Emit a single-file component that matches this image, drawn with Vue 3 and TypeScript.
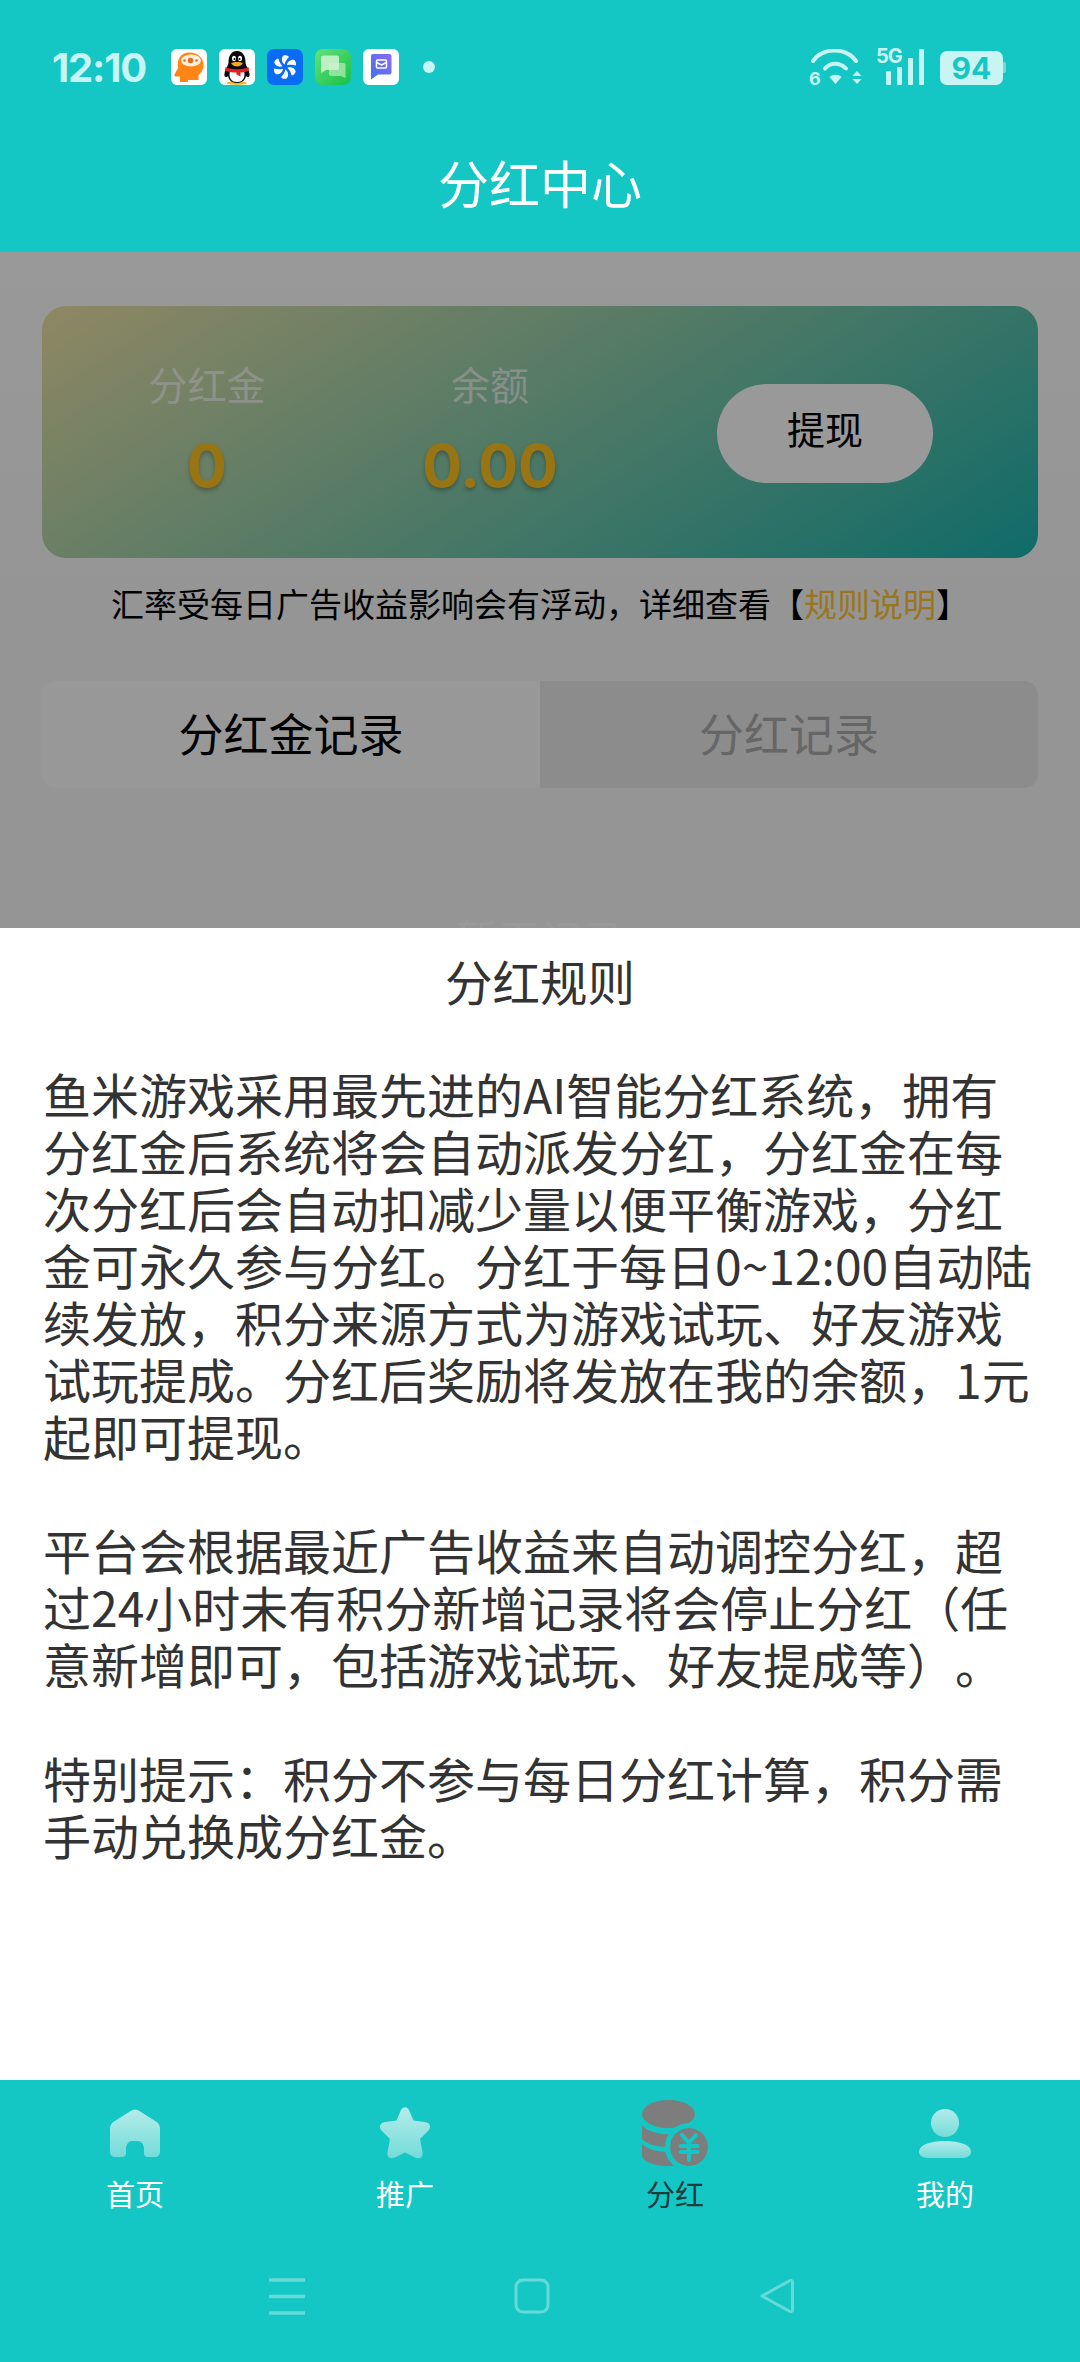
<script setup lang="ts">
const rules: string[][] = [
  [
    '鱼米游戏采用最先进的AI智能分红系统，拥有',
    '分红金后系统将会自动派发分红，分红金在每',
    '次分红后会自动扣减少量以便平衡游戏，分红',
    '金可永久参与分红。分红于每日0~12:00自动陆',
    '续发放，积分来源方式为游戏试玩、好友游戏',
    '试玩提成。分红后奖励将发放在我的余额，1元',
    '起即可提现。',
  ],
  [
    '平台会根据最近广告收益来自动调控分红，超',
    '过24小时未有积分新增记录将会停止分红（任',
    '意新增即可，包括游戏试玩、好友提成等）。',
  ],
  [
    '特别提示：积分不参与每日分红计算，积分需',
    '手动兑换成分红金。',
  ],
]

const blades = [0, 60, 120, 180, 240, 300]
</script>

<template>
  <div class="phone">
    <header class="top">
      <div class="status">
        <span class="time">12:10</span>
        <div class="apps">
          <svg class="app" viewBox="0 0 36 36">
            <rect width="36" height="36" rx="6" fill="#fff" />
            <path d="M9 33V27.500H5C3.500 27.500 3 26.500 3.500 25.500L7 19C5.500 10 10 3.500 18.500 3.500C27 3.500 32.500 9 32.500 16C32.500 21 30 24 27.500 26V31H17V33Z" fill="#ff8616" />
            <ellipse cx="20" cy="11.500" rx="10" ry="6" fill="#ffeedd" />
            <circle cx="19.500" cy="11.500" r="2.800" fill="#e0701a" />
            <circle cx="13.500" cy="11.500" r="1.300" fill="#e0701a" />
            <circle cx="25.500" cy="11.500" r="1.300" fill="#e0701a" />
          </svg>
          <svg class="app" viewBox="0 0 36 36">
            <rect width="36" height="36" rx="6" fill="#fff" />
            <ellipse cx="18" cy="34" rx="10" ry="1.800" fill="#f5b71a" />
            <path d="M18 2C11.500 2 9.500 8 9.500 13C9.500 15 9 16 7.500 19C5.500 23 4.500 27 6.500 28C8 28.500 9 27 9 27C10 32 14 34 18 34C22 34 26 32 27 27C27 27 28 28.500 29.500 28C31.500 27 30.500 23 28.500 19C27 16 26.500 15 26.500 13C26.500 8 24.500 2 18 2Z" fill="#0a0a0a" />
            <path d="M11.500 21C9.500 25 10 33 18 33C26 33 26.500 25 24.500 21Z" fill="#fff" />
            <ellipse cx="15" cy="9.500" rx="2" ry="2.800" fill="#fff" />
            <ellipse cx="21" cy="9.500" rx="2" ry="2.800" fill="#fff" />
            <circle cx="15.500" cy="10" r="1" fill="#000" />
            <circle cx="20.500" cy="10" r="1" fill="#000" />
            <path d="M12 14C15 12.500 21 12.500 24 14C23 16.500 20 17.500 18 17.500C16 17.500 13 16.500 12 14Z" fill="#f7a51c" />
            <path d="M6.500 18C12 21 24 21 29.500 18L30 21.500C27 23 24 23.500 21.500 23.500V27.500L17.500 25.500V23.500C13 23.500 9 23 6 21.500Z" fill="#e21f26" />
          </svg>
          <svg class="app" viewBox="0 0 36 36">
            <rect width="36" height="36" rx="7" fill="#0a6cf5" />
            <g fill="#fff">
              <path
                v-for="deg in blades"
                :key="deg"
                d="M17.500 15.500C14.500 13 14 9 16.500 6.500C18 5.800 21 6.200 22 8C20 10 18.300 12.500 17.500 15.500Z"
                :transform="`rotate(${deg} 18 18)`"
              />
            </g>
          </svg>
          <svg class="app" viewBox="0 0 36 36">
            <defs>
              <linearGradient id="chat-bg" x1="0" y1="0" x2="1" y2="1">
                <stop offset="0" stop-color="#63e27a" />
                <stop offset="1" stop-color="#18bf48" />
              </linearGradient>
            </defs>
            <rect width="36" height="36" rx="8" fill="url(#chat-bg)" />
            <path d="M14 14H28.500A2 2 0 0 1 30.500 16V29L26 27H16A2 2 0 0 1 14 25Z" fill="#a6e8ae" fill-opacity=".8" />
            <path d="M8 6.500H22A2 2 0 0 1 24 8.500V19A2 2 0 0 1 22 21H11L6 24V8.500A2 2 0 0 1 8 6.500Z" fill="#d2f3d4" fill-opacity=".85" />
          </svg>
          <svg class="app" viewBox="0 0 36 36">
            <defs>
              <linearGradient id="mail-bg" x1="0" y1="1" x2="1" y2="0">
                <stop offset="0" stop-color="#3f72ee" />
                <stop offset="1" stop-color="#8b6cf4" />
              </linearGradient>
            </defs>
            <rect width="36" height="36" rx="6" fill="#fff" />
            <path d="M10 5H26.500A2 2 0 0 1 28.500 7V23.500A2 2 0 0 1 26.500 25.500H15L8 30.500V7A2 2 0 0 1 10 5Z" fill="url(#mail-bg)" />
            <rect x="13.500" y="11" width="10" height="8" rx="1" fill="none" stroke="#fff" stroke-width="1.500" />
            <path d="M13.500 13.500L18.500 16L23.500 13.500" fill="none" stroke="#fff" stroke-width="1.500" />
          </svg>
          <i class="dot"></i>
        </div>
        <div class="sys">
          <svg class="wifi" viewBox="0 0 53 36">
            <g fill="none" stroke="#c8f4f3" stroke-width="4" stroke-linecap="round">
              <path d="M4 12C14 -2 37 -2 47 12" />
              <path d="M16 19.500C21 13 31 13 37 19.500" />
            </g>
            <path d="M20.500 28C23.500 25 29.500 25 32.500 28L26.500 35Z" fill="#c8f4f3" />
            <path d="M48 22L52.500 27H43.500ZM43.500 30H52.500L48 35Z" fill="#c8f4f3" />
            <text x="0" y="36" class="wifi-six">6</text>
          </svg>
          <svg class="signal" viewBox="0 0 48 36">
            <text x="0" y="14" class="five-g">5G</text>
            <rect x="10" y="22" width="5" height="14" rx="1" fill="#c8f4f3" />
            <rect x="21" y="18" width="5" height="18" rx="1" fill="#c8f4f3" />
            <rect x="32" y="9" width="5" height="27" rx="1" fill="#c8f4f3" />
            <rect x="43" y="0" width="5" height="36" rx="1" fill="#c8f4f3" />
          </svg>
          <div class="battery"><span>94</span></div>
        </div>
      </div>
      <h1 class="title">分红中心</h1>
    </header>

    <main class="page">
      <section class="card">
        <div class="stat">
          <span class="stat-label">分红金</span>
          <b class="stat-value">0</b>
        </div>
        <div class="stat">
          <span class="stat-label">余额</span>
          <b class="stat-value">0.00</b>
        </div>
        <button class="withdraw" type="button">提现</button>
      </section>
      <p class="note">汇率受每日广告收益影响会有浮动，详细查看【<em>规则说明</em>】</p>
      <div class="tabs">
        <div class="tab active">分红金记录</div>
        <div class="tab">分红记录</div>
      </div>
      <p class="empty">暂无记录</p>

      <div class="mask"></div>
      <section class="sheet">
        <h2 class="sheet-title">分红规则</h2>
        <div class="rules">
          <p v-for="(para, i) in rules" :key="i">
            <span v-for="line in para" :key="line">{{ line }}</span>
          </p>
        </div>
      </section>
    </main>

    <footer class="bottom">
      <nav class="tabbar">
        <div class="nav-item">
          <svg class="nav-icon" viewBox="0 0 60 60">
            <defs>
              <linearGradient id="soft" x1="0" y1="0" x2="0" y2="1">
                <stop offset="0" stop-color="#b4ecea" />
                <stop offset="1" stop-color="#74dcd9" />
              </linearGradient>
            </defs>
            <path d="M26.500 7.500C28.500 6 31.500 6 33.500 7.500L51 18.500C53.500 20 55 22.500 55 25.500V49C55 52 52.500 54 50 54H43C40.500 54 39 52.500 39 50V46C39 41 36 38 33 38H27C24 38 21 41 21 46V50C21 52.500 19.500 54 17 54H10C7.500 54 5 52 5 49V25.500C5 22.500 6.500 20 9 18.500Z" fill="url(#soft)" />
          </svg>
          <span>首页</span>
        </div>
        <div class="nav-item">
          <svg class="nav-icon" viewBox="0 0 60 60">
            <path d="M25.500 8C27.500 3 32.500 3 34.500 8L38.500 17.500L50 19C55.500 20 56.500 24.500 53 28L45 36L47.500 49C48.500 54.500 44 56.500 40 54.500L30 49.500L20 54.500C16 56.500 11.500 54.500 12.500 49L15 36L7 28C3.500 24.500 4.500 20 10 19L21.500 17.500Z" fill="url(#soft)" />
          </svg>
          <span>推广</span>
        </div>
        <div class="nav-item current">
          <svg class="nav-icon" viewBox="0 0 60 60">
            <g fill="#7d7d7d">
              <ellipse cx="23.500" cy="11" rx="26.500" ry="14" />
              <path d="M-3 22C3 30 20 33 33 30C28 34 25 39 24 44C12 44 1 41 -3 36Z" />
              <path d="M-3 41C2 46 12 49 24 49C25 54 27 59 30 63H22C8 63 -3 58 -3 52Z" />
              <circle cx="44" cy="44" r="19" />
            </g>
            <circle cx="44" cy="44" r="21.500" fill="none" stroke="#14c7c4" stroke-width="5" />
            <path d="M37 32L44 40L51 32M35.500 43H52.500M35.500 49H52.500M44 40V57" fill="none" stroke="#14c7c4" stroke-width="4" stroke-linecap="round" />
          </svg>
          <span>分红</span>
        </div>
        <div class="nav-item">
          <svg class="nav-icon" viewBox="0 0 60 60">
            <circle cx="30" cy="20" r="14" fill="url(#soft)" />
            <path d="M13 55C8 55 4 52.500 4 49C4 42 15 38 30 38C45 38 56 42 56 49C56 52.500 52 55 47 55Z" fill="url(#soft)" />
          </svg>
          <span>我的</span>
        </div>
      </nav>
      <div class="sysnav">
        <svg viewBox="0 0 36 36" class="sys-btn">
          <path d="M0 2H36M0 18.500H36M0 35H36" fill="none" stroke="#fff" stroke-opacity=".35" stroke-width="3.400" />
        </svg>
        <svg viewBox="0 0 36 36" class="sys-btn">
          <rect x="2" y="2" width="32" height="32" rx="7" fill="none" stroke="#fff" stroke-opacity=".35" stroke-width="3" />
        </svg>
        <svg viewBox="0 0 36 36" class="sys-btn">
          <path d="M3 18L31 2.500C32 2 33.500 2.500 33.500 4V32C33.500 33.500 32 34 31 33.500Z" fill="none" stroke="#fff" stroke-opacity=".35" stroke-width="3" stroke-linejoin="round" />
        </svg>
      </div>
    </footer>
  </div>
</template>

<style>
html,
body {
  margin: 0;
  background: #14c7c4;
}
</style>

<style scoped>
.phone {
  display: flex;
  flex-direction: column;
  width: 1080px;
  height: 2362px;
  overflow: hidden;
  font-family: "Noto Sans CJK SC", "Noto Sans", sans-serif;
  text-spacing-trim: space-all;
}

.top {
  height: 252px;
  flex: none;
  background: #14c7c4;
}

.status {
  display: flex;
  align-items: center;
  height: 36px;
  padding: 49px 74px 0 52px;
}

.time {
  width: 119px;
  font-family: Inter, "Noto Sans", sans-serif;
  font-size: 40px;
  font-weight: 700;
  letter-spacing: -1.200px;
  color: #c8f4f3;
}

.apps {
  display: flex;
  align-items: center;
  gap: 12px;
}

.app {
  display: block;
  width: 36px;
  height: 36px;
}

.dot {
  width: 12px;
  height: 12px;
  margin-left: 12px;
  border-radius: 50%;
  background: #c8f4f3;
}

.sys {
  display: flex;
  align-items: center;
  gap: 14px;
  margin-left: auto;
}

.wifi {
  display: block;
  width: 53px;
  height: 36px;
}

.wifi-six {
  font: 700 18px Inter, sans-serif;
  fill: #c8f4f3;
}

.signal {
  display: block;
  width: 48px;
  height: 36px;
  overflow: visible;
}

.five-g {
  font: 700 20px Inter, sans-serif;
  fill: #c8f4f3;
  letter-spacing: -1px;
}

.battery {
  position: relative;
  display: flex;
  align-items: center;
  justify-content: center;
  width: 63px;
  height: 34px;
  margin: 2px 3px 0 2px;
  border-radius: 7px;
  background: #c8f4f3;
  font: 700 30px Inter, sans-serif;
  color: #14c7c4;
}

.battery::after {
  content: "";
  position: absolute;
  top: 11px;
  right: -3px;
  width: 3px;
  height: 11px;
  border-radius: 0 2px 2px 0;
  background: #6fdcd9;
}

.title {
  margin: 0;
  padding-top: 61px;
  font-size: 51px;
  font-weight: 400;
  line-height: 72px;
  text-align: center;
  color: #fff;
}

.page {
  position: relative;
  flex: 1;
  box-sizing: border-box;
  padding: 54px 42px 0;
  background: linear-gradient(#fff, #f8f8f8 400px);
}

.card {
  display: flex;
  align-items: center;
  height: 252px;
  border-radius: 24px;
  background: linear-gradient(148deg, #efe2a6 0%, #1ab3ae 100%);
}

.stat {
  display: flex;
  flex-direction: column;
  align-items: center;
  gap: 23px;
  width: 200px;
  margin-bottom: 11px;
}

.stat:first-child {
  margin-left: 65px;
}

.stat:nth-child(2) {
  margin-left: 83px;
}

.stat-label {
  font-size: 39px;
  line-height: 56px;
  color: #fff;
  opacity: .7;
}

.stat-value {
  font-family: Inter, "Noto Sans", sans-serif;
  font-size: 59px;
  font-weight: 700;
  line-height: 64px;
  color: #ffc21f;
  text-shadow: 0 3px 4px rgba(0, 0, 0, .25);
}

.withdraw {
  width: 216px;
  height: 99px;
  margin: 2px 105px 0 auto;
  padding: 0 0 12px;
  border: 0;
  border-radius: 50px;
  background: #fff;
  font: inherit;
  font-size: 38px;
  color: #000;
}

.note {
  margin: 22px 0 0;
  font-size: 33px;
  line-height: 46px;
  text-align: center;
  white-space: nowrap;
  color: #000;
}

.note em {
  font-style: normal;
  color: #ffc533;
}

.tabs {
  display: flex;
  height: 107px;
  margin-top: 55px;
  overflow: hidden;
  border-radius: 14px;
}

.tab {
  display: flex;
  flex: 1;
  align-items: center;
  justify-content: center;
  padding-bottom: 5px;
  background: #eaeaea;
  font-size: 45px;
  color: #aaa;
}

.tab.active {
  background: #fefefe;
  color: #000;
}

.empty {
  margin: 120px 0 0;
  font-size: 42px;
  line-height: 60px;
  text-align: center;
  color: #fff;
}

.mask {
  position: absolute;
  inset: 0;
  background: rgba(0, 0, 0, .4);
}

.sheet {
  position: absolute;
  right: 0;
  bottom: 0;
  left: 0;
  box-sizing: border-box;
  height: 1152px;
  padding: 19px 43px 0;
  background: #fff;
}

.sheet-title {
  margin: 0;
  font-size: 47.500px;
  font-weight: 400;
  line-height: 68px;
  text-align: center;
  color: #333;
}

.rules {
  margin-top: 50px;
  font-size: 48px;
  line-height: 57px;
  color: #333;
}

.rules p {
  margin: 0 0 57px;
}

.rules span {
  display: block;
  white-space: nowrap;
}

.bottom {
  flex: none;
  height: 282px;
  background: #14c7c4;
}

.tabbar {
  display: grid;
  grid-template-columns: repeat(4, 270px);
  padding-top: 23px;
}

.nav-item {
  display: flex;
  flex-direction: column;
  align-items: center;
  font-size: 29px;
  line-height: 40px;
  color: #fff;
}

.nav-icon {
  display: block;
  width: 60px;
  height: 60px;
  margin: 0 0 10px;
  overflow: visible;
}

.nav-item.current {
  color: #1c3d3d;
}

.sysnav {
  display: grid;
  grid-template-columns: 36px 36px 36px;
  justify-content: space-between;
  width: 526px;
  margin: 65px 0 0 269px;
}

.sys-btn {
  display: block;
  width: 36px;
  height: 36px;
  overflow: visible;
}
</style>
